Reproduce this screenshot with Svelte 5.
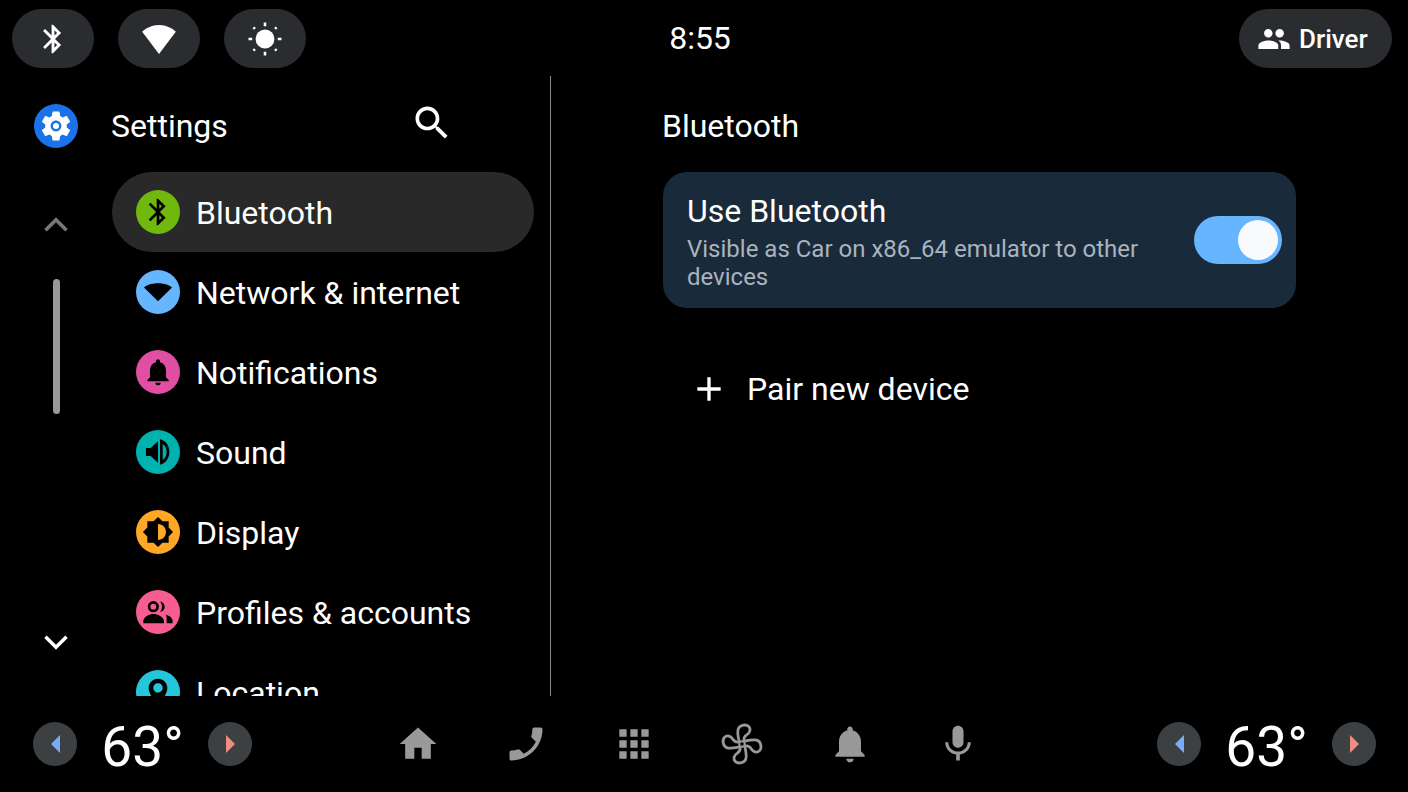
<script>
	const bt = 'M17.71 7.71L12 2h-1v7.59L6.41 5 5 6.41 10.59 12 5 17.59 6.41 19 11 14.41V22h1l5.71-5.71-4.3-4.29 4.3-4.29zM13 5.83l1.88 1.88L13 9.59V5.83zm1.88 10.46L13 18.17v-3.76l1.88 1.88z';
	const bell = 'M12 22c1.1 0 2-.9 2-2h-4c0 1.1.89 2 2 2zm6-6v-5c0-3.07-1.64-5.64-4.5-6.32V4c0-.83-.67-1.5-1.5-1.5s-1.5.67-1.5 1.5v.68C7.63 5.36 6 7.92 6 11v5l-2 2v1h16v-1l-2-2z';
	const people = 'M16 11c1.66 0 2.99-1.34 2.99-3S17.66 5 16 5c-1.66 0-3 1.34-3 3s1.34 3 3 3zm-8 0c1.66 0 2.99-1.34 2.99-3S9.66 5 8 5C6.34 5 5 6.34 5 8s1.34 3 3 3zm0 2c-2.33 0-7 1.17-7 3.5V19h14v-2.5c0-2.33-4.67-3.5-7-3.5zm8 0c-.29 0-.62.02-.97.05 1.16.84 1.97 1.97 1.97 3.45V19h6v-2.5c0-2.33-4.67-3.5-7-3.5z';
	const gear = 'M19.14 12.94c.04-.3.06-.61.06-.94 0-.32-.02-.64-.07-.94l2.03-1.58c.18-.14.23-.41.12-.61l-1.92-3.32c-.12-.22-.37-.29-.59-.22l-2.39.96c-.5-.38-1.03-.7-1.62-.94l-.36-2.54c-.04-.24-.24-.41-.48-.41h-3.84c-.24 0-.43.17-.47.41l-.36 2.54c-.59.24-1.13.57-1.62.94l-2.39-.96c-.22-.08-.47 0-.59.22L2.74 8.87c-.12.21-.08.47.12.61l2.03 1.58c-.05.3-.09.63-.09.94s.02.64.07.94l-2.03 1.58c-.18.14-.23.41-.12.61l1.92 3.32c.12.22.37.29.59.22l2.39-.96c.5.38 1.03.7 1.62.94l.36 2.54c.05.24.24.41.48.41h3.84c.24 0 .44-.17.47-.41l.36-2.54c.59-.24 1.13-.56 1.62-.94l2.39.96c.22.08.47 0 .59-.22l1.92-3.32c.12-.22.07-.47-.12-.61l-2.01-1.58zM12 15.6c-1.98 0-3.6-1.62-3.6-3.6s1.62-3.6 3.6-3.6 3.6 1.62 3.6 3.6-1.62 3.6-3.6 3.6z';
	const blade = 'M17.500 18C16.500 13.500 15.500 10 16.500 6.500 17.500 3 23 1.500 26 4 28.500 6.500 27 10 24.500 11.500 22.500 12.800 21 15 22 18';

	const menu = [
		{ label: 'Bluetooth', color: '#70b80d', size: 32, d: bt, active: true },
		{ label: 'Network & internet', color: '#66b5ff', size: 32, d: 'M12 19L22.5 8.6C21 7.2 17 5.5 12 5.5S3 7.2 1.5 8.6L12 19z' },
		{ label: 'Notifications', color: '#e04fa3', size: 32, d: bell },
		{ label: 'Sound', color: '#00b2ae', size: 32, d: 'M3 9v6h3.500l5.500 5V4L6.500 9H3zM13.500 2.500C18 3.500 20.500 7.500 20.500 12S18 20.500 13.500 21.500V2.500zM15.500 6V18C17.500 16.500 18.500 14.500 18.500 12S17.500 7.500 15.500 6z' },
		{ label: 'Display', color: '#ffa726', size: 32, d: 'M20 15.31L23.31 12 20 8.69V4h-4.69L12 .69 8.69 4H4v4.69L.69 12 4 15.31V20h4.69L12 23.31 15.31 20H20v-4.69zM12 18V6c3.31 0 6 2.69 6 6s-2.69 6-6 6z' },
		{ label: 'Profiles & accounts', color: '#f55d93', size: 32, d: 'M8.500 3.800a4.200 4.200 0 1 0 0 8.400 4.200 4.200 0 0 0 0-8.400zM8.500 5.800a2.200 2.200 0 1 1 0 4.400 2.200 2.200 0 0 1 0-4.400zM1 20.500V19C1 15.500 5.500 13.500 8.500 13.500S16.500 15.500 16.500 19v1.500H1zM13.500 4.100C15.500 4.300 17 6 17 8S15.500 11.700 13.500 11.900C14.600 10.800 15 9.400 15 8S14.600 5.200 13.500 4.100zM18 14C20.500 14.800 23 16.200 23 19v1.500h-4.500V19C18.500 17 18.500 15.500 18 14z' },
		{ label: 'Location', color: '#26c6da', size: 32, d: 'M12 2C8.13 2 5 5.130 5 9c0 5.250 7 13 7 13s7-7.750 7-13c0-3.870-3.130-7-7-7zm0 10.500c-1.930 0-3.500-1.570-3.500-3.500s1.570-3.500 3.500-3.500 3.500 1.570 3.500 3.500-1.570 3.500-3.500 3.500z' }
	];

	const nav = [
		{ name: 'home', d: 'M10 20v-6h4v6h5v-8h3L12 3 2 12h3v8z' },
		{ name: 'phone', flip: true, d: 'M6.62 10.790c1.440 2.830 3.760 5.140 6.590 6.590l2.200-2.200c.27-.27.67-.36 1.020-.24 1.120.37 2.330.57 3.570.57.55 0 1 .45 1 1V20c0 .55-.45 1-1 1-9.390 0-17-7.610-17-17 0-.55.45-1 1-1h3.500c.55 0 1 .45 1 1 0 1.250.2 2.450.57 3.570.11.35.03.74-.25 1.020l-2.200 2.200z' },
		{ name: 'apps', d: 'M4 4h4v4H4zM10 4h4v4h-4zM16 4h4v4h-4zM4 10h4v4H4zM10 10h4v4h-4zM16 10h4v4h-4zM4 16h4v4H4zM10 16h4v4h-4zM16 16h4v4h-4z' },
		{ name: 'fan' },
		{ name: 'bell', d: bell },
		{ name: 'mic', d: 'M12 14c1.660 0 3-1.340 3-3V5c0-1.660-1.340-3-3-3S9 3.340 9 5v6c0 1.660 1.340 3 3 3zm5.300-3c0 3-2.540 5.100-5.300 5.100S6.700 14 6.700 11H5c0 3.410 2.720 6.230 6 6.720V21h2v-3.280c3.280-.48 6-3.300 6-6.720h-1.700z' }
	];
</script>

<div class="screen">
	<header class="status">
		<div class="pills">
			<button class="pill">
				<svg class="ic34" viewBox="0 0 24 24"><path d={bt} /></svg>
			</button>
			<button class="pill">
				<svg class="ic42" viewBox="0 0 24 24"><path d="M12 20.500L21.600 7.900C20.800 6.800 17 4 12 4S3.200 6.800 2.400 7.900L12 20.500z" /></svg>
			</button>
			<button class="pill">
				<svg class="sun" viewBox="0 0 24 24">
					<circle cx="12" cy="12" r="6.300" />
					<path class="rays" d="M12 1v2.500M12 20.500v2.500M1 12h2.500M20.500 12H23M4.300 4.300l1 1M18.700 18.700l1 1M4.300 19.700l1-1M18.700 5.300l1-1" />
				</svg>
			</button>
		</div>
		<div class="clock">8:55</div>
		<button class="pill driver">
			<svg class="ic34" viewBox="0 0 24 24"><path d={people} /></svg>
			<span>Driver</span>
		</button>
	</header>

	<main class="main">
		<section class="left">
			<aside class="rail">
				<div class="app-icon">
					<svg viewBox="0 0 24 24">
						<path d={gear} />
						<circle cx="12" cy="12" r="2" />
					</svg>
				</div>
				<svg class="chev up" viewBox="0 0 24 24"><path d="M5 15.500l7-7 7 7" /></svg>
				<div class="track"><div class="thumb"></div></div>
				<svg class="chev" viewBox="0 0 24 24"><path d="M5 8.500l7 7 7-7" /></svg>
			</aside>
			<div class="menu-col">
				<div class="menu-head">
					<h1>Settings</h1>
					<svg class="search" viewBox="0 0 24 24"><path d="M15.500 14h-.79l-.28-.27C15.410 12.590 16 11.110 16 9.500 16 5.910 13.090 3 9.500 3S3 5.910 3 9.500 5.910 16 9.500 16c1.610 0 3.090-.59 4.230-1.570l.27.28v.79l5 4.990L20.490 19l-4.990-5zm-6 0C7.010 14 5 11.990 5 9.500S7.010 5 9.500 5 14 7.010 14 9.500 11.990 14 9.500 14z" /></svg>
				</div>
				<ul class="menu">
					{#each menu as item}
						<li class="item" class:active={item.active}>
							<span class="dot" style="background: {item.color}">
								<svg style="width: {item.size}px; height: {item.size}px" viewBox="0 0 24 24"><path fill-rule="evenodd" d={item.d} /></svg>
							</span>
							<span class="label">{item.label}</span>
						</li>
					{/each}
				</ul>
			</div>
		</section>

		<section class="right">
			<h2>Bluetooth</h2>
			<div class="card">
				<div class="card-text">
					<div class="card-title">Use Bluetooth</div>
					<div class="card-sub">Visible as Car on x86_64 emulator to other devices</div>
				</div>
				<div class="toggle"><div class="knob"></div></div>
			</div>
			<div class="pair">
				<svg viewBox="0 0 24 24"><path d="M19 13h-6v6h-2v-6H5v-2h6V5h2v6h6v2z" /></svg>
				<span>Pair new device</span>
			</div>
		</section>
	</main>

	<footer class="bottom">
		{#snippet climate()}
			<div class="climate">
				<button class="round"><span class="tri tri-l"></span></button>
				<span class="temp">63°</span>
				<button class="round"><span class="tri tri-r"></span></button>
			</div>
		{/snippet}
		{@render climate()}
		<nav class="nav">
			{#each nav as n}
				<div class="nav-btn">
					{#if n.name === 'fan'}
						<svg class="fan" viewBox="0 0 40 40">
							{#each [0, 90, 180, 270] as angle}
								<path transform="rotate({angle} 20 20)" d={blade} />
							{/each}
							<circle cx="20" cy="20" r="3.400" />
							<circle class="hub" cx="20" cy="20" r="1.600" />
						</svg>
					{:else}
						<svg class:flip={n.flip} viewBox="0 0 24 24"><path d={n.d} /></svg>
					{/if}
				</div>
			{/each}
		</nav>
		{@render climate()}
	</footer>
</div>

<style>
	:global(body) {
		background: #000;
	}

	.screen {
		width: 1408px;
		height: 792px;
		display: flex;
		flex-direction: column;
		overflow: hidden;
		background: #000;
		color: #fff;
		font-family: Roboto, sans-serif;
	}

	button {
		border: none;
		padding: 0;
		color: inherit;
		font: inherit;
	}

	svg {
		fill: currentColor;
		display: block;
	}

	.status {
		height: 76px;
		flex: none;
		display: grid;
		grid-template-columns: 1fr auto 1fr;
		align-items: start;
		padding: 9px 16px 0 12px;
		box-sizing: border-box;
	}

	.pills {
		display: flex;
		gap: 24px;
	}

	.pill {
		width: 82px;
		height: 59px;
		border-radius: 30px;
		background: #2a2c30;
		display: flex;
		align-items: center;
		justify-content: center;
	}

	.ic34 {
		width: 34px;
		height: 34px;
	}

	.ic42 {
		width: 42px;
		height: 42px;
	}

	.sun {
		width: 36px;
		height: 36px;
	}

	.rays {
		fill: none;
		stroke: currentColor;
		stroke-width: 1.700;
	}

	.clock {
		font-size: 32px;
		line-height: 59px;
		margin-right: 4px;
	}

	.driver {
		width: 153px;
		justify-self: end;
		justify-content: flex-start;
		padding-left: 18px;
		box-sizing: border-box;
		gap: 8px;
		font-size: 26px;
		font-weight: 500;
	}

	.main {
		height: 620px;
		flex: none;
		display: flex;
	}

	.left {
		width: 551px;
		flex: none;
		display: flex;
		border-right: 1px solid #8a8a8a;
		box-sizing: border-box;
		height: 100%;
	}

	.rail {
		width: 112px;
		flex: none;
		display: flex;
		flex-direction: column;
		align-items: center;
		padding: 28px 0 36px;
		box-sizing: border-box;
	}

	.app-icon {
		width: 44px;
		height: 44px;
		border-radius: 50%;
		background: #1a73e8;
		display: flex;
		align-items: center;
		justify-content: center;
	}

	.app-icon svg {
		width: 36px;
		height: 36px;
	}

	.chev {
		width: 36px;
		height: 36px;
		flex: none;
	}

	.chev path {
		fill: none;
		stroke: #fff;
		stroke-width: 2.400;
	}

	.chev.up {
		margin-top: 59px;
	}

	.chev.up path {
		stroke: #777;
	}

	.track {
		flex: 1;
		width: 7px;
		padding-top: 36px;
	}

	.thumb {
		height: 135px;
		border-radius: 4px;
		background: #999;
	}

	.menu-col {
		flex: 1;
		min-width: 0;
		display: flex;
		flex-direction: column;
		padding-right: 16px;
		overflow: hidden;
	}

	.menu-head {
		height: 96px;
		flex: none;
		display: flex;
		align-items: center;
		padding-top: 4px;
		box-sizing: border-box;
	}

	h1,
	h2 {
		margin: 0 0 0 -1px;
		font-size: 32px;
		font-weight: 400;
	}

	.search {
		width: 44px;
		height: 44px;
		margin-left: 182px;
		margin-top: -6px;
	}

	.menu {
		list-style: none;
		margin: 0;
		padding: 0;
	}

	.item {
		height: 80px;
		display: flex;
		align-items: center;
		gap: 16px;
		padding-left: 24px;
		border-radius: 40px;
		font-size: 32px;
		white-space: nowrap;
	}

	.item.active {
		background: #292929;
	}

	.label {
		padding-top: 2px;
	}

	.dot {
		width: 44px;
		height: 44px;
		flex: none;
		border-radius: 50%;
		display: flex;
		align-items: center;
		justify-content: center;
		color: #000;
	}

	.right {
		flex: 1;
		padding-left: 112px;
		display: flex;
		flex-direction: column;
		align-items: flex-start;
	}

	h2 {
		height: 96px;
		line-height: 100px;
	}

	.card {
		width: 633px;
		height: 136px;
		box-sizing: border-box;
		display: flex;
		align-items: center;
		justify-content: space-between;
		padding: 0 14px 0 24px;
		border-radius: 24px;
		background: #192a3a;
	}

	.card-text {
		width: 490px;
		padding-top: 2px;
	}

	.card-title {
		font-size: 32px;
		line-height: 40px;
		margin-bottom: 4px;
	}

	.card-sub {
		font-size: 24px;
		line-height: 28px;
		color: #a9b4be;
	}

	.toggle {
		width: 88px;
		height: 48px;
		border-radius: 24px;
		background: #66b5ff;
		display: flex;
		align-items: center;
		justify-content: flex-end;
		padding-right: 4px;
		box-sizing: border-box;
	}

	.knob {
		width: 40px;
		height: 40px;
		border-radius: 50%;
		background: #f8fafd;
	}

	.pair {
		display: flex;
		align-items: center;
		gap: 18px;
		height: 80px;
		margin-top: 41px;
		padding-left: 26px;
		font-size: 32px;
	}

	.pair svg {
		width: 40px;
		height: 40px;
	}

	.bottom {
		flex: 1;
		display: flex;
		align-items: center;
		justify-content: space-between;
		padding: 0 32px 0 33px;
	}

	.climate {
		display: flex;
		align-items: center;
	}

	.round {
		width: 44px;
		height: 44px;
		border-radius: 50%;
		background: #3c4043;
		display: flex;
		align-items: center;
		justify-content: center;
	}

	.tri {
		width: 0;
		height: 0;
		border-top: 9px solid transparent;
		border-bottom: 9px solid transparent;
	}

	.tri-l {
		border-right: 9px solid #7baaf7;
	}

	.tri-r {
		border-left: 9px solid #f28b82;
	}

	.temp {
		width: 131px;
		text-align: center;
		font-size: 55px;
		padding-top: 6px;
	}

	.nav {
		display: flex;
		margin-right: 33px;
		color: #999;
	}

	.nav-btn {
		width: 108px;
		display: flex;
		justify-content: center;
	}

	.nav-btn svg {
		width: 44px;
		height: 44px;
	}

	.flip {
		transform: scaleX(-1);
	}

	.fan path {
		fill: none;
		stroke: currentColor;
		stroke-width: 2.500;
	}

	.fan .hub {
		fill: #000;
	}
</style>
